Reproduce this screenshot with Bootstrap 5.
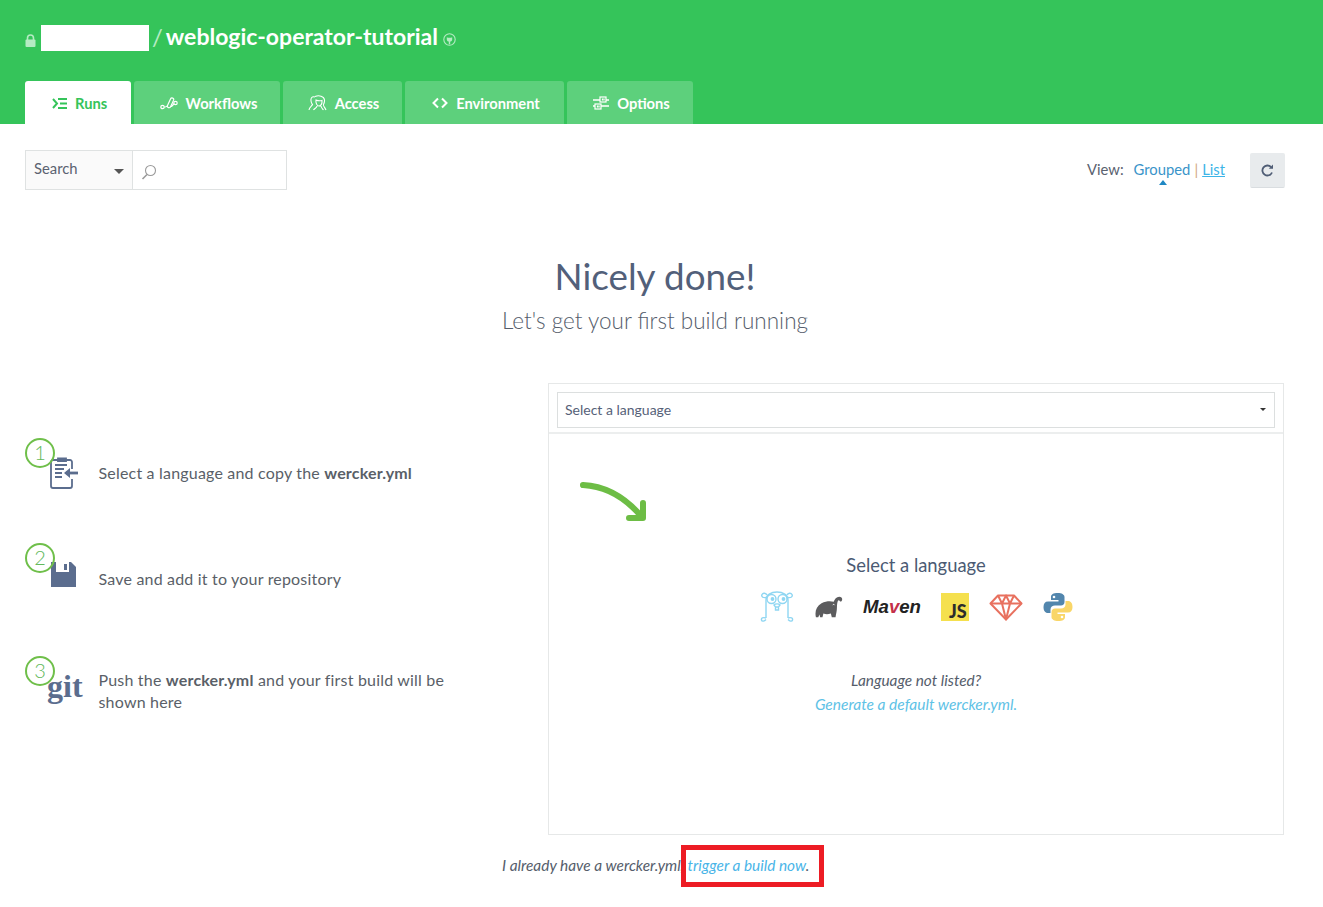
<!DOCTYPE html>
<html lang="en">
<head>
  <meta charset="UTF-8" />
  <meta name="viewport" content="width=device-width, initial-scale=1.0"/>
  <title>weblogic-operator-tutorial - Runs</title>
  <link href="https://cdn.jsdelivr.net/npm/bootstrap@5.3.0/dist/css/bootstrap.min.css" rel="stylesheet">
  <style>
    body { font-family: Lato, "Liberation Sans", sans-serif; color: #555d6b; background: #fff; font-size: 16px; }
    .app-head { background: #35c45a; height: 124px; padding: 0 25px; }
    .title-row { height: 81px; padding-top: 25px; color: #fff; align-items: flex-start; }
    .owner-box { width: 108px; height: 26px; background: #fff; margin: 0 3px 0 5px; }
    .lock-ico { margin-top: 9px; }
    .title-sep { font-size: 24px; line-height: 24px; color: #b5ebc3; font-weight: 400; margin-right: 3px; }
    .repo-name { font-size: 23px; line-height: 23px; font-weight: 700; }
    .gh-ico { margin: 8px 0 0 5px; }
    .tab-row { gap: 3px; }
    .tab-item { height: 43px; background: #5dd07c; color: #fff; font-size: 14.7px; font-weight: 700; border-radius: 3px 3px 0 0; text-decoration: none; gap: 8px; padding-top: 1px; }
    .tab-item:hover { color: #fff; }
    .tab-item.is-on { background: #fff; color: #35c45a; }
    .tab-runs { width: 106px; padding-left: 27px; }
    .tab-work { width: 146px; justify-content: center; padding-left: 3px; }
    .tab-access { width: 119px; justify-content: center; padding-left: 2px; }
    .tab-env { width: 159px; justify-content: center; padding-left: 3px; }
    .tab-opt { width: 126px; justify-content: center; padding-left: 3px; }
    .page-body { padding: 26px 38px 29px 25px; }
    .search-box { width: 262px; height: 40px; border: 1px solid #dfe2e2; }
    .search-kind { width: 107px; background: #fafafa; border-right: 1px solid #dfe2e2; font-size: 14.8px; color: #5a6270; padding: 0 8px 3px 8px; }
    .caret-down { width: 0; height: 0; border: 5px solid transparent; border-top: 5px solid #555; border-bottom: 0; margin-top: 5px; }
    .view-bar { font-size: 14.8px; height: 38px; }
    .view-label { margin-right: 10px; color: #5a6270; }
    .view-active { color: #3a94c9; position: relative; text-decoration: none; }
    .view-active::after { content: ""; position: absolute; left: 25px; bottom: -5px; border: 4px solid transparent; border-bottom: 5px solid #1f88c4; border-top: 0; }
    .view-sep { color: #d2a77e; margin: 0 4px; }
    .view-link { color: #3cb4e7; }
    .refresh-btn { width: 35px; height: 35px; background: #e8ebed; border-radius: 2px; border-bottom: 1px solid #d9dde0; margin-left: 25px; margin-top: 3px; }
    .hero-title { font-size: 36.8px; font-weight: 400; color: #52607a; line-height: 44px; margin: 64px 0 0 0; }
    .hero-sub { font-size: 22.5px; font-weight: 300; color: #555d6b; line-height: 30px; margin: 8px 0 0 0; }
    .guide-row { margin-top: 47px; }
    .steps-col { width: 523px; flex: none; padding-top: 55px; }
    .step-line { display: flex; }
    .step-one { height: 105px; }
    .step-two { height: 113px; }
    .step-ico { width: 73.5px; flex: none; position: relative; height: 50px; }
    .step-num { position: absolute; left: 0; top: 0; width: 30px; height: 30px; border: 2px solid #6fbf4a; border-radius: 50%; background: transparent; color: #62b95c; font-size: 20px; font-weight: 300; line-height: 25px; text-align: center; z-index: 2; }
    .step-glyph { position: absolute; left: 25px; top: 18px; }
    .git-word { position: absolute; left: 22px; top: 10px; font-family: "Liberation Serif", serif; font-weight: 700; font-size: 32px; line-height: 40px; color: #5b6d8e; }
    .step-text { font-size: 16px; letter-spacing: .19px; line-height: 22px; color: #5a5f68; width: 372px; }
    .step-text b { font-weight: 700; }
    .step-one .step-text { padding-top: 24px; }
    .step-two .step-text { padding-top: 25px; }
    .step-three .step-text { padding-top: 13px; }
    .lang-panel { width: 736px; height: 452px; border: 1px solid #e6e8e8; position: relative; }
    .lang-top { height: 50px; padding: 8px 8px 0 8px; border-bottom: 2px solid #eceeee; }
    .lang-select { height: 36px; border: 1px solid #dcdfdf; padding: 0 7px 1px 7px; font-size: 14px; color: #566178; }
    .small-caret { width: 0; height: 0; border: 3px solid transparent; border-top: 3px solid #333; border-bottom: 0; margin-right: 1px; }
    .hint-arrow { position: absolute; left: 30px; top: 95px; }
    .lang-main { padding-top: 119px; text-align: center; }
    .lang-head { font-size: 18.4px; color: #4b5a73; line-height: 24px; margin: 0; }
    .lang-logos { height: 36px; margin-top: 12px; gap: 20px; }
    .maven-word { font-family: "Liberation Sans", sans-serif; font-size: 18.6px; font-weight: 700; font-style: italic; color: #222; line-height: 36px; }
    .maven-v { color: #c4304a; }
    .not-listed { font-size: 15.4px; font-style: italic; color: #555d6b; margin: 43px 0 0 0; line-height: 24px; }
    .gen-link { font-size: 15.5px; font-style: italic; color: #5fc2e6; text-decoration: none; line-height: 24px; }
    .foot-note { position: relative; width: 306px; margin: 20px auto 0 auto; font-size: 15.4px; font-style: italic; line-height: 22px; color: #555d6b; white-space: nowrap; top: -1px; }
    .foot-note a { color: #4ab5e8; text-decoration: none; }
    .red-mark { position: absolute; left: 179px; top: -9px; width: 143px; height: 42px; border: 5px solid #ed1c24; pointer-events: none; }
  </style>
</head>
<body>
  <header class="app-head">
    <div class="title-row d-flex">
      <svg class="lock-ico" width="11" height="13" viewBox="0 0 11 13"><path d="M2.500 6V4a3 3 0 0 1 6 0v2" fill="none" stroke="#b5ebc3" stroke-width="1.600"/><rect x="0.500" y="5.500" width="10" height="7.500" rx="1" fill="#b5ebc3"/></svg>
      <div class="owner-box"></div>
      <span class="title-sep">/</span>
      <span class="repo-name">weblogic-operator-tutorial</span>
      <svg class="gh-ico" width="13" height="13" viewBox="0 0 13 13"><circle cx="6.500" cy="6.500" r="5.700" fill="none" stroke="#b5ebc3" stroke-width="1.100"/><path d="M3.800 4.200l1.200.6h3l1.200-.6v2.200c0 1.300-.9 2-2 2.100v2.700H5.800V8.500c-1.100-.1-2-.8-2-2.100z" fill="#b5ebc3"/></svg>
    </div>
    <nav class="tab-row d-flex">
      <a href="#" class="tab-item is-on tab-runs d-flex align-items-center">
        <svg width="15" height="11" viewBox="0 0 15 11" fill="none" stroke="#35c45a" stroke-width="2"><path d="M1 1l4 4.500L1 10"/><path d="M6 1h9M8 5.500h7M6 10h9"/></svg>Runs</a>
      <a href="#" class="tab-item tab-work d-flex align-items-center">
        <svg width="18" height="16" viewBox="0 0 18 16" fill="none" stroke="#fff" stroke-width="1.200"><circle cx="2.500" cy="12" r="1.700"/><circle cx="15.500" cy="8" r="1.700"/><path d="M4.200 12H5c1.500 0 2-.7 2.500-1.500l3-6.500c.9-1.900 4-.9 3.100 1.200l-3 6.500c-.9 1.900-4 .9-3.100-1.200"/><path d="M10.500 11.500c1.500 0 2.500-1 3.300-3"/></svg>Workflows</a>
      <a href="#" class="tab-item tab-access d-flex align-items-center">
        <svg width="19" height="16" viewBox="0 0 19 16" fill="none" stroke="#fff" stroke-width="1.100"><path d="M7 2C4 1 2.500 3 3 6c.3 2 1 3 1.500 3.500C4 11 1.500 12 1 15"/><path d="M7 1.500c4-1.500 9-.5 9.500 3.500.2 2-.5 3.500-1 4.500-.5 1.500 1.500 3 2.500 5.500"/><path d="M8 5c2 1 4 1 6 .5.3 3-1 5.500-3 5.500S7.500 8 8 5zM9 11c-.3 2-2.500 2.500-3.500 4M13 11c.3 2 1.500 2.500 2.500 4"/></svg>Access</a>
      <a href="#" class="tab-item tab-env d-flex align-items-center">
        <svg width="16" height="12" viewBox="0 0 16 12" fill="none" stroke="#fff" stroke-width="2"><path d="M6 1.500L1.500 6 6 10.500M10 1.500L14.500 6 10 10.500"/></svg>Environment</a>
      <a href="#" class="tab-item tab-opt d-flex align-items-center">
        <svg width="16" height="14" viewBox="0 0 16 14" fill="none" stroke="#fff" stroke-width="1.200"><path d="M0 4h7M13 4h3M0 10h2M8 10h8" stroke-width="1.600"/><rect x="7" y="1" width="6" height="5"/><rect x="2" y="8" width="6" height="5"/><path d="M9.500 2.500v2M11 2.500v2M4.500 9.500v2M6 9.500v2"/></svg>Options</a>
    </nav>
  </header>

  <main class="page-body">
    <div class="d-flex justify-content-between">
      <div class="search-box d-flex">
        <div class="search-kind d-flex align-items-center justify-content-between"><span>Search</span><span class="caret-down"></span></div>
        <div class="d-flex align-items-center ps-2 pt-1">
          <svg width="16" height="16" viewBox="0 0 16 16" fill="none" stroke="#9a9a9a" stroke-width="1.100"><circle cx="9.500" cy="6.500" r="5"/><path d="M6 10.500L1.500 15" stroke-width="1.600"/></svg>
        </div>
      </div>
      <div class="view-bar d-flex align-items-center">
        <span class="view-label">View:</span>
        <a href="#" class="view-active">Grouped</a>
        <span class="view-sep">|</span>
        <a href="#" class="view-link">List</a>
        <button type="button" class="refresh-btn btn p-0 d-flex align-items-center justify-content-center">
          <svg width="13" height="13" viewBox="0 0 13 13" fill="none" stroke="#4f5d75" stroke-width="1.800"><path d="M11 8.500A5 5 0 1 1 10 3"/><path d="M12 .5v4.200H7.800z" fill="#4f5d75" stroke="none"/></svg>
        </button>
      </div>
    </div>

    <div class="text-center">
      <h1 class="hero-title">Nicely done!</h1>
      <p class="hero-sub">Let's get your first build running</p>
    </div>

    <div class="guide-row d-flex">
      <div class="steps-col">
        <div class="step-line step-one">
          <div class="step-ico">
            <span class="step-num">1</span>
            <svg class="step-glyph" width="30" height="34" viewBox="0 0 30 34" fill="none" stroke="#5b6d8e" stroke-width="1.800"><path d="M8 4h-5a2 2 0 0 0-2 2v24a2 2 0 0 0 2 2h17a2 2 0 0 0 2-2v-7M22 13V6a2 2 0 0 0-2-2h-4"/><path d="M8 5V2.500h8V5z" fill="#5b6d8e"/><path d="M5 9h12M5 13h9M5 17h7M5 21h7"/><path d="M16 17h12" stroke-width="2.800"/><path d="M20 12l-6 5 6 5z" fill="#5b6d8e" stroke="none"/></svg>
          </div>
          <div class="step-text">Select a language and copy the <b>wercker.yml</b></div>
        </div>
        <div class="step-line step-two">
          <div class="step-ico">
            <span class="step-num">2</span>
            <svg class="step-glyph" width="27" height="27" viewBox="0 0 27 27"><path d="M1 1h20l5 5v20H1z" fill="#5b6d8e"/><path d="M6 1h13v10H6z" fill="#fff"/><path d="M14 3h3v6h-3z" fill="#5b6d8e"/></svg>
          </div>
          <div class="step-text">Save and add it to your repository</div>
        </div>
        <div class="step-line step-three">
          <div class="step-ico">
            <span class="step-num">3</span>
            <span class="git-word">git</span>
          </div>
          <div class="step-text">Push the <b>wercker.yml</b> and your first build will be shown here</div>
        </div>
      </div>

      <section class="lang-panel">
        <div class="lang-top">
          <div class="lang-select d-flex align-items-center justify-content-between"><span>Select a language</span><span class="small-caret"></span></div>
        </div>
        <svg class="hint-arrow" width="72" height="44" viewBox="0 0 72 44" fill="none" stroke="#6dbd45" stroke-width="6" stroke-linecap="round" stroke-linejoin="round"><path d="M4 6c20 1 40 10 58 31"/><path d="M64 24v15H50"/></svg>
        <div class="lang-main">
          <p class="lang-head">Select a language</p>
          <div class="lang-logos d-flex align-items-center justify-content-center">
            <svg width="36" height="32" viewBox="0 0 36 32" fill="none" stroke="#8fd6f2" stroke-width="1.400"><path d="M7 27V9c0-5 5-8 11-8s11 3 11 8v18"/><path d="M7 6.500C4 7 2 5.500 3 3.500s4-1.500 5 .5M29 6.500c3 .5 5-1 4-3s-4-1.500-5 .5"/><circle cx="12.500" cy="8" r="4.500"/><circle cx="23.500" cy="8" r="4.500"/><circle cx="13.500" cy="8" r="1.200" fill="#8fd6f2"/><circle cx="24.500" cy="8" r="1.200" fill="#8fd6f2"/><path d="M15 14c1-1.500 5-1.500 6 0l-1.500 2h-3zM16.500 16v3h3v-3"/><path d="M7 27c-3-1-5 0-4.500 2s3 1 4.500-.5M29 27c3-1 5 0 4.500 2s-3 1-4.500-.5"/></svg>
            <svg width="28" height="24" viewBox="0 0 30 24"><path d="M1 23c-1.500-6 .5-12 6-15 5-2.500 10-2.500 13-1.500 1-3 3-5.500 6-5.500 2.500 0 3.500 1.500 3 3.500s-2 2-2.500 1-1.500-1-2 0-1 4-1 7c0 3.500-1 7-1.500 10.500h-4l-1-4c-3 1-5.500 1-8 0l-1 4H5.500l-.7-3-1.300 3z" fill="#5c5c5e"/><path d="M19 10c.5-1 1.500-1 2 0" stroke="#fff" fill="none"/></svg>
            <span class="maven-word">Ma<span class="maven-v">v</span>en</span>
            <svg width="28" height="28" viewBox="0 0 28 28"><rect width="28" height="28" fill="#f5e04e"/><text x="8" y="25" font-family="Lato, sans-serif" font-size="18" font-weight="900" fill="#2c2c2c">JS</text></svg>
            <svg width="34" height="27" viewBox="0 0 34 27" fill="none" stroke="#e8715f" stroke-width="2" stroke-linejoin="round"><path d="M9 1.500h16l7.500 8L17 25.500 1.500 9.500z"/><path d="M1.500 9.500h31M9 1.500l4 8 4-8 4 8 4-8M13 9.500l4 16 4-16"/></svg>
            <svg width="30" height="30" viewBox="0 0 30 30"><path d="M15 1c-5 0-7 1.500-7 4v3h7.500v1.500H5c-3 0-4.500 2-4.500 5.500S2 21 5 21h2.500v-3.500c0-2.500 2-4 4.500-4h6c2 0 3.500-1.500 3.500-3.500V5c0-2.500-3-4-6.500-4z" fill="#5286ad"/><path d="M15 29c5 0 7-1.500 7-4v-3h-7.500v-1.500H25c3 0 4.500-2 4.500-5.500S28 9 25 9h-2.500v3.500c0 2.500-2 4-4.500 4h-6c-2 0-3.500 1.500-3.500 3.500v5c0 2.500 3 4 6.500 4z" fill="#f9d668"/><circle cx="11" cy="5" r="1.300" fill="#fff"/><circle cx="19" cy="25" r="1.300" fill="#fff"/></svg>
          </div>
          <p class="not-listed">Language not listed?</p>
          <a href="#" class="gen-link">Generate a default wercker.yml.</a>
        </div>
      </section>
    </div>

    <div class="foot-note">I already have a wercker.yml, <a href="#">trigger a build now</a>.<span class="red-mark"></span></div>
  </main>
  <script src="https://cdn.jsdelivr.net/npm/bootstrap@5.3.0/dist/js/bootstrap.bundle.min.js"></script>
</body>
</html>
